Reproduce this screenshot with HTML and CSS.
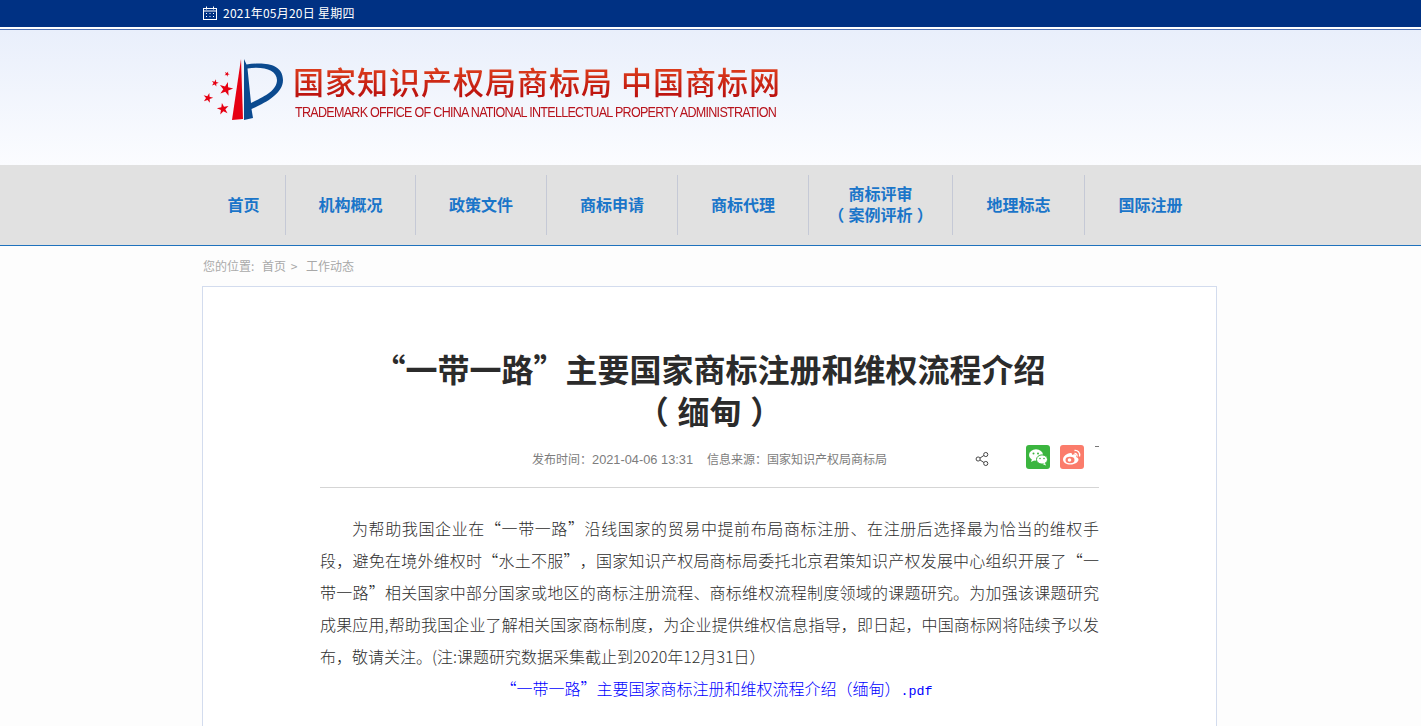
FILE: index.html
```html
<!DOCTYPE html>
<html lang="zh-CN">
<head>
    <meta charset="utf-8" />
    <title>“一带一路”主要国家商标注册和维权流程介绍（缅甸）</title>
    <link rel="stylesheet" href="styles.css">
</head>
<body>
    <div class="topbar">
        <div class="wrap topbar-inner">
            <svg class="cal-icon" width="14" height="14" viewBox="0 0 14 14" fill="none" stroke="#fff" stroke-width="1">
                <rect x="0.5" y="2.5" width="13" height="11"/>
                <path d="M3.5 0.5v3M10.5 0.5v3M0.5 5h13"/>
                <path d="M3 7.5h1M6.5 7.5h1M10 7.5h1M3 10.5h1M6.5 10.5h1M10 10.5h1"/>
            </svg>
            <span class="today">2021年05月20日 星期四</span>
        </div>
    </div>

    <div class="header">
        <div class="wrap logo">
            <svg class="logo-mark" width="81" height="62" viewBox="0 0 81 62">
                <defs>
                    <polygon id="star" points="0,-10 2.2,-3.1 9.5,-3.1 3.6,1.2 5.900,8.100 0,3.800 -5.900,8.100 -3.600,1.200 -9.500,-3.100 -2.200,-3.100"/>
                </defs>
                <path fill="#e60012" d="M38 0L29 61L40 60Z"/>
                <path fill="#0b4a8f" fill-rule="evenodd" d="M41 0L43.500 5.500C60 3 80 4 80 21C80 35 62 44 48.500 50L50 59L41 61ZM44.500 9.500L48 44C60 38 74 32 74 21C74 11 60 7 44.500 9.500Z"/>
                <g fill="#e60012">
                    <use href="#star" transform="translate(23 30) rotate(15) scale(.72)"/>
                    <use href="#star" transform="translate(12 24) rotate(15) scale(.38)"/>
                    <use href="#star" transform="translate(5 39) rotate(15) scale(.52)"/>
                    <use href="#star" transform="translate(20 50) rotate(-10) scale(.62)"/>
                    <use href="#star" transform="translate(24 15) rotate(25) scale(.28)"/>
                </g>
            </svg>
            <div class="logo-text">
                <div class="logo-cn">国家知识产权局商标局 中国商标网</div>
                <div class="logo-en">TRADEMARK OFFICE OF CHINA NATIONAL INTELLECTUAL PROPERTY ADMINISTRATION</div>
            </div>
        </div>
    </div>

    <div class="nav">
        <div class="wrap nav-list">
            <a class="nav-item nav-first">首页</a>
            <a class="nav-item nav-second">机构概况</a>
            <a class="nav-item">政策文件</a>
            <a class="nav-item">商标申请</a>
            <a class="nav-item">商标代理</a>
            <a class="nav-item nav-wide">商标评审<br><span class="paren-l">（</span>案例评析<span class="paren-r">）</span></a>
            <a class="nav-item nav-geo">地理标志</a>
            <a class="nav-item nav-last">国际注册</a>
        </div>
    </div>

    <div class="wrap crumbs">
        <span>您的位置:</span>
        <span class="crumb-link">首页 &gt;</span>
        <span class="crumb-link crumb-last">工作动态</span>
    </div>

    <div class="wrap">
        <div class="article">
            <h1 class="title">“一带一路”主要国家商标注册和维权流程介绍<br><span class="paren-l">（</span>缅甸<span class="paren-r">）</span></h1>
            <div class="meta">
                <span class="meta-time">发布时间：<span class="num">2021-04-06 13:31</span></span>
                <span class="meta-source">信息来源：国家知识产权局商标局</span>
                <svg class="share-icon" width="16" height="16" viewBox="0 0 16 16" fill="none" stroke="#444" stroke-width="1.100">
                    <circle cx="3.500" cy="8" r="2.300"/>
                    <circle cx="12" cy="3" r="2.300"/>
                    <circle cx="12" cy="13" r="2.300"/>
                    <path d="M5.500 7l4.500-3M5.500 9l4.500 3"/>
                </svg>
                <span class="social social-wechat">
                    <svg width="24" height="24" viewBox="0 0 24 24" fill="#fff">
                        <ellipse cx="10" cy="10" rx="7" ry="5.800"/>
                        <path d="M6 14l-1 3 4-2z"/>
                        <ellipse cx="16" cy="14.500" rx="5.500" ry="4.600" stroke="#3bb53f" stroke-width="1"/>
                        <path d="M19 18l1 2.500-3.500-1.500z"/>
                        <g fill="#3bb53f">
                            <circle cx="7.500" cy="8.500" r="1"/>
                            <circle cx="12" cy="8.500" r="1"/>
                            <circle cx="14" cy="13.500" r="0.800"/>
                            <circle cx="18" cy="13.500" r="0.800"/>
                        </g>
                    </svg>
                </span>
                <span class="social social-weibo">
                    <svg width="24" height="24" viewBox="0 0 24 24">
                        <path fill="#fff" d="M10.500 8c-4 .5-7.500 3.500-7.500 6.500 0 3 3.500 5 7.500 5 4.500 0 8-2.500 8-5 0-1.800-1.800-2.300-2.500-2.500.5-1.500.2-2.500-1-2.800-1-.2-2.300.3-3 .8.300-1.500-.3-2.200-1.500-2z"/>
                        <ellipse fill="#fb7c6b" cx="10" cy="15" rx="4.500" ry="3.300"/>
                        <circle fill="#fff" cx="9.500" cy="15" r="1.800"/>
                        <path fill="none" stroke="#fff" stroke-width="1.300" d="M14.500 5.500c3-.5 6 2 5 6M14.500 8.500c1.500-.3 3 1 2.500 3"/>
                    </svg>
                </span>
                <span class="meta-dash"></span>
            </div>
            <div class="content">
                <p class="para">为帮助我国企业在“一带一路”沿线国家的贸易中提前布局商标注册、在注册后选择最为恰当的维权手段，避免在境外维权时“水土不服”，国家知识产权局商标局委托北京君策知识产权发展中心组织开展了“一带一路”相关国家中部分国家或地区的商标注册流程、商标维权流程制度领域的课题研究。为加强该课题研究成果应用,帮助我国企业了解相关国家商标制度，为企业提供维权信息指导，即日起，中国商标网将陆续予以发布，敬请关注。(注:课题研究数据采集截止到2020年12月31日）</p>
                <p class="file-link"><a>“一带一路”主要国家商标注册和维权流程介绍（缅甸）<span class="mono">.pdf</span></a></p>
            </div>
        </div>
    </div>
</body>
</html>
```

FILE: styles.css
```css
* {
    margin: 0;
    padding: 0;
    box-sizing: border-box;
}

html {
    overflow: hidden;
}

body {
    font-family: "Noto Sans CJK SC", "Liberation Sans", sans-serif;
    background: #fdfdfd;
    color: #333;
    height: 726px;
    overflow: hidden;
    text-spacing-trim: space-all;
}

.wrap {
    width: 1015px;
    margin-left: 202px;
}

/* top bar */
.topbar {
    height: 29px;
    background: #003183;
    border-bottom: 2px solid #fff;
    box-shadow: 0 1px 0 #4a6db0;
    color: #fff;
    font-size: 12px;
    letter-spacing: 0.25px;
}

.topbar-inner {
    display: flex;
    align-items: center;
    height: 26px;
}

.cal-icon {
    margin-left: 1px;
    margin-right: 6px;
}

.today {
    margin-top: -1px;
}

/* header */
.header {
    height: 135px;
    margin-top: 1px;
    background: linear-gradient(#e9effb 0%, #fbfcff 100%);
}

.logo {
    display: flex;
    padding-top: 29px;
    padding-left: 1px;
}

.logo-mark {
    flex: none;
}

.logo-text {
    margin-left: 9px;
    margin-top: 4px;
}

.logo-cn {
    font-size: 31px;
    line-height: 36px;
    font-weight: 500;
    letter-spacing: 1px;
    width: 500px;
    white-space: nowrap;
    background: linear-gradient(#e2451f, #b80d0d);
    -webkit-background-clip: text;
    background-clip: text;
    color: transparent;
}

.logo-en {
    font-family: "Liberation Sans", sans-serif;
    font-size: 14px;
    line-height: 16px;
    letter-spacing: -0.8px;
    margin-top: 5px;
    margin-left: 2px;
    white-space: nowrap;
    color: #b7131c;
    transform: scaleX(0.896);
    transform-origin: left center;
}

/* nav */
.nav {
    height: 81px;
    background: #e1e1e1;
    border-bottom: 1px solid #1f72bd;
}

.nav-list {
    display: flex;
    padding-top: 10px;
}

.nav-item {
    width: 131px;
    height: 60px;
    display: flex;
    align-items: center;
    justify-content: center;
    text-align: center;
    color: #1a75c9;
    font-size: 16px;
    font-weight: 700;
    line-height: 21px;
    border-right: 1px solid #c5c9d6;
    padding-bottom: 1px;
}

.nav-first {
    width: 84px;
}

.nav-second {
    width: 130px;
}

.nav-wide {
    font-family: "Liberation Sans", "Noto Sans CJK SC", sans-serif;
    width: 144px;
    display: block;
    padding-top: 9px;
}

.nav-geo {
    width: 132px;
}

.nav-last {
    border-right: none;
}

/* full-width brackets sit centred in the original font */
.paren-l,
.paren-r {
    display: inline-block;
}

.paren-l {
    transform: translateX(-0.27em);
}

.paren-r {
    transform: translateX(0.27em);
}

/* breadcrumbs */
.crumbs {
    height: 40px;
    padding-top: 12px;
    padding-left: 1px;
    font-size: 12px;
    line-height: 16px;
    color: #aaa;
}

.crumb-link {
    margin-left: 5px;
    color: #a8a8a8;
    word-spacing: 2px;
}

.crumb-last {
    margin-left: 6px;
}

/* article */
.article {
    background: #fff;
    border: 1px solid #d3dcee;
    height: 460px;
    padding: 0 117px;
}

.title {
    margin-top: 60px;
    font-size: 32px;
    line-height: 42px;
    font-weight: 700;
    text-align: center;
    color: #2b2b2b;
}

.meta {
    display: flex;
    align-items: center;
    height: 46px;
    margin-top: 11px;
    padding-bottom: 12px;
    padding-left: 212px;
    border-bottom: 1px solid #d5d5d5;
    font-size: 12px;
    color: #7d7d7d;
    white-space: nowrap;
}

.num {
    font-family: "Liberation Sans", sans-serif;
    font-size: 12.8px;
}

.meta-source {
    margin-left: 14px;
}

.share-icon {
    margin-left: 88px;
}

.social {
    width: 24px;
    height: 24px;
    border-radius: 3px;
    display: block;
    margin-top: -4px;
}

.social svg {
    display: block;
}

.social-wechat {
    background: #3bb53f;
    margin-left: 37px;
}

.social-weibo {
    background: #fb7c6b;
    margin-left: 10px;
}

.meta-dash {
    width: 4px;
    height: 1px;
    background: #777;
    margin-left: 11px;
    margin-top: -24px;
}

.content {
    margin-top: 24px;
    font-size: 16px;
    line-height: 32px;
    color: #2e2e2e;
    font-weight: 300;
}

.mono {
    font-family: "Liberation Mono", monospace;
    font-size: 13.33px;
    line-height: 1;
}

.para {
    text-indent: 32px;
    text-align: justify;
}

.file-link {
    text-align: center;
    padding-left: 14px;
}

.file-link a {
    color: #0000ff;
}
```
